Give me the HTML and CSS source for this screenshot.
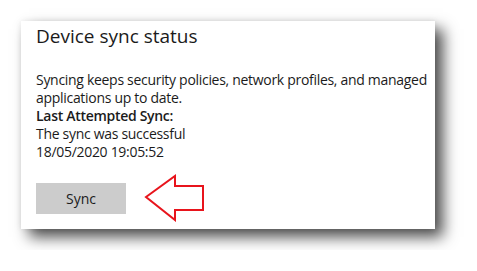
FILE: index.html
```html
<!DOCTYPE html>
<html lang="en">
<head>
  <meta charset="UTF-8">
  <meta name="viewport" content="width=device-width, initial-scale=1.0">
  <title>Device sync status</title>
  <link rel="stylesheet" href="styles.css">
</head>
<body>
  <div class="card">
    <h1>Device sync status</h1>
    <p class="info">Syncing keeps security policies, network profiles, and managed applications up to date.</p>
    <p class="label">Last Attempted Sync:</p>
    <p>The sync was successful</p>
    <p>18/05/2020 19:05:52</p>
    <div class="actions">
      <button class="sync-btn">Sync</button>
      <svg class="arrow" width="62" height="48" viewBox="0 0 62 48">
        <polygon points="2,23 31,2 31,12 59,12 59,36 31,36 31,46" fill="none" stroke="#e8141c" stroke-width="2"/>
      </svg>
    </div>
  </div>
</body>
</html>
```

FILE: styles.css
```css
body {
  margin: 0;
  padding: 21px;
  background-color: #fff;
  font-family: "Open Sans", "Noto Sans", sans-serif;
  color: #1b1b1b;
}
.card {
  width: 414px;
  height: 208px;
  box-sizing: border-box;
  padding: 2px 0 0 15px;
  background-color: #fff;
  box-shadow: 8px 8px 14px rgba(0,0,0,0.7), 0 0 6px rgba(0,0,0,0.08);
}
.card h1 {
  margin: 0 0 22px 0;
  font-size: 19px;
  font-weight: 400;
  line-height: 26px;
}
.card p {
  margin: 0;
  font-size: 14px;
  line-height: 18px;
  letter-spacing: -0.3px;
}
.card .label {
  font-weight: 600;
}
.actions {
  display: flex;
  align-items: center;
  gap: 18px;
  margin-top: 13px;
}
.sync-btn {
  width: 90px;
  height: 31px;
  border: none;
  background-color: #cccccc;
  font-family: inherit;
  font-size: 14px;
  color: #1b1b1b;
}
```
